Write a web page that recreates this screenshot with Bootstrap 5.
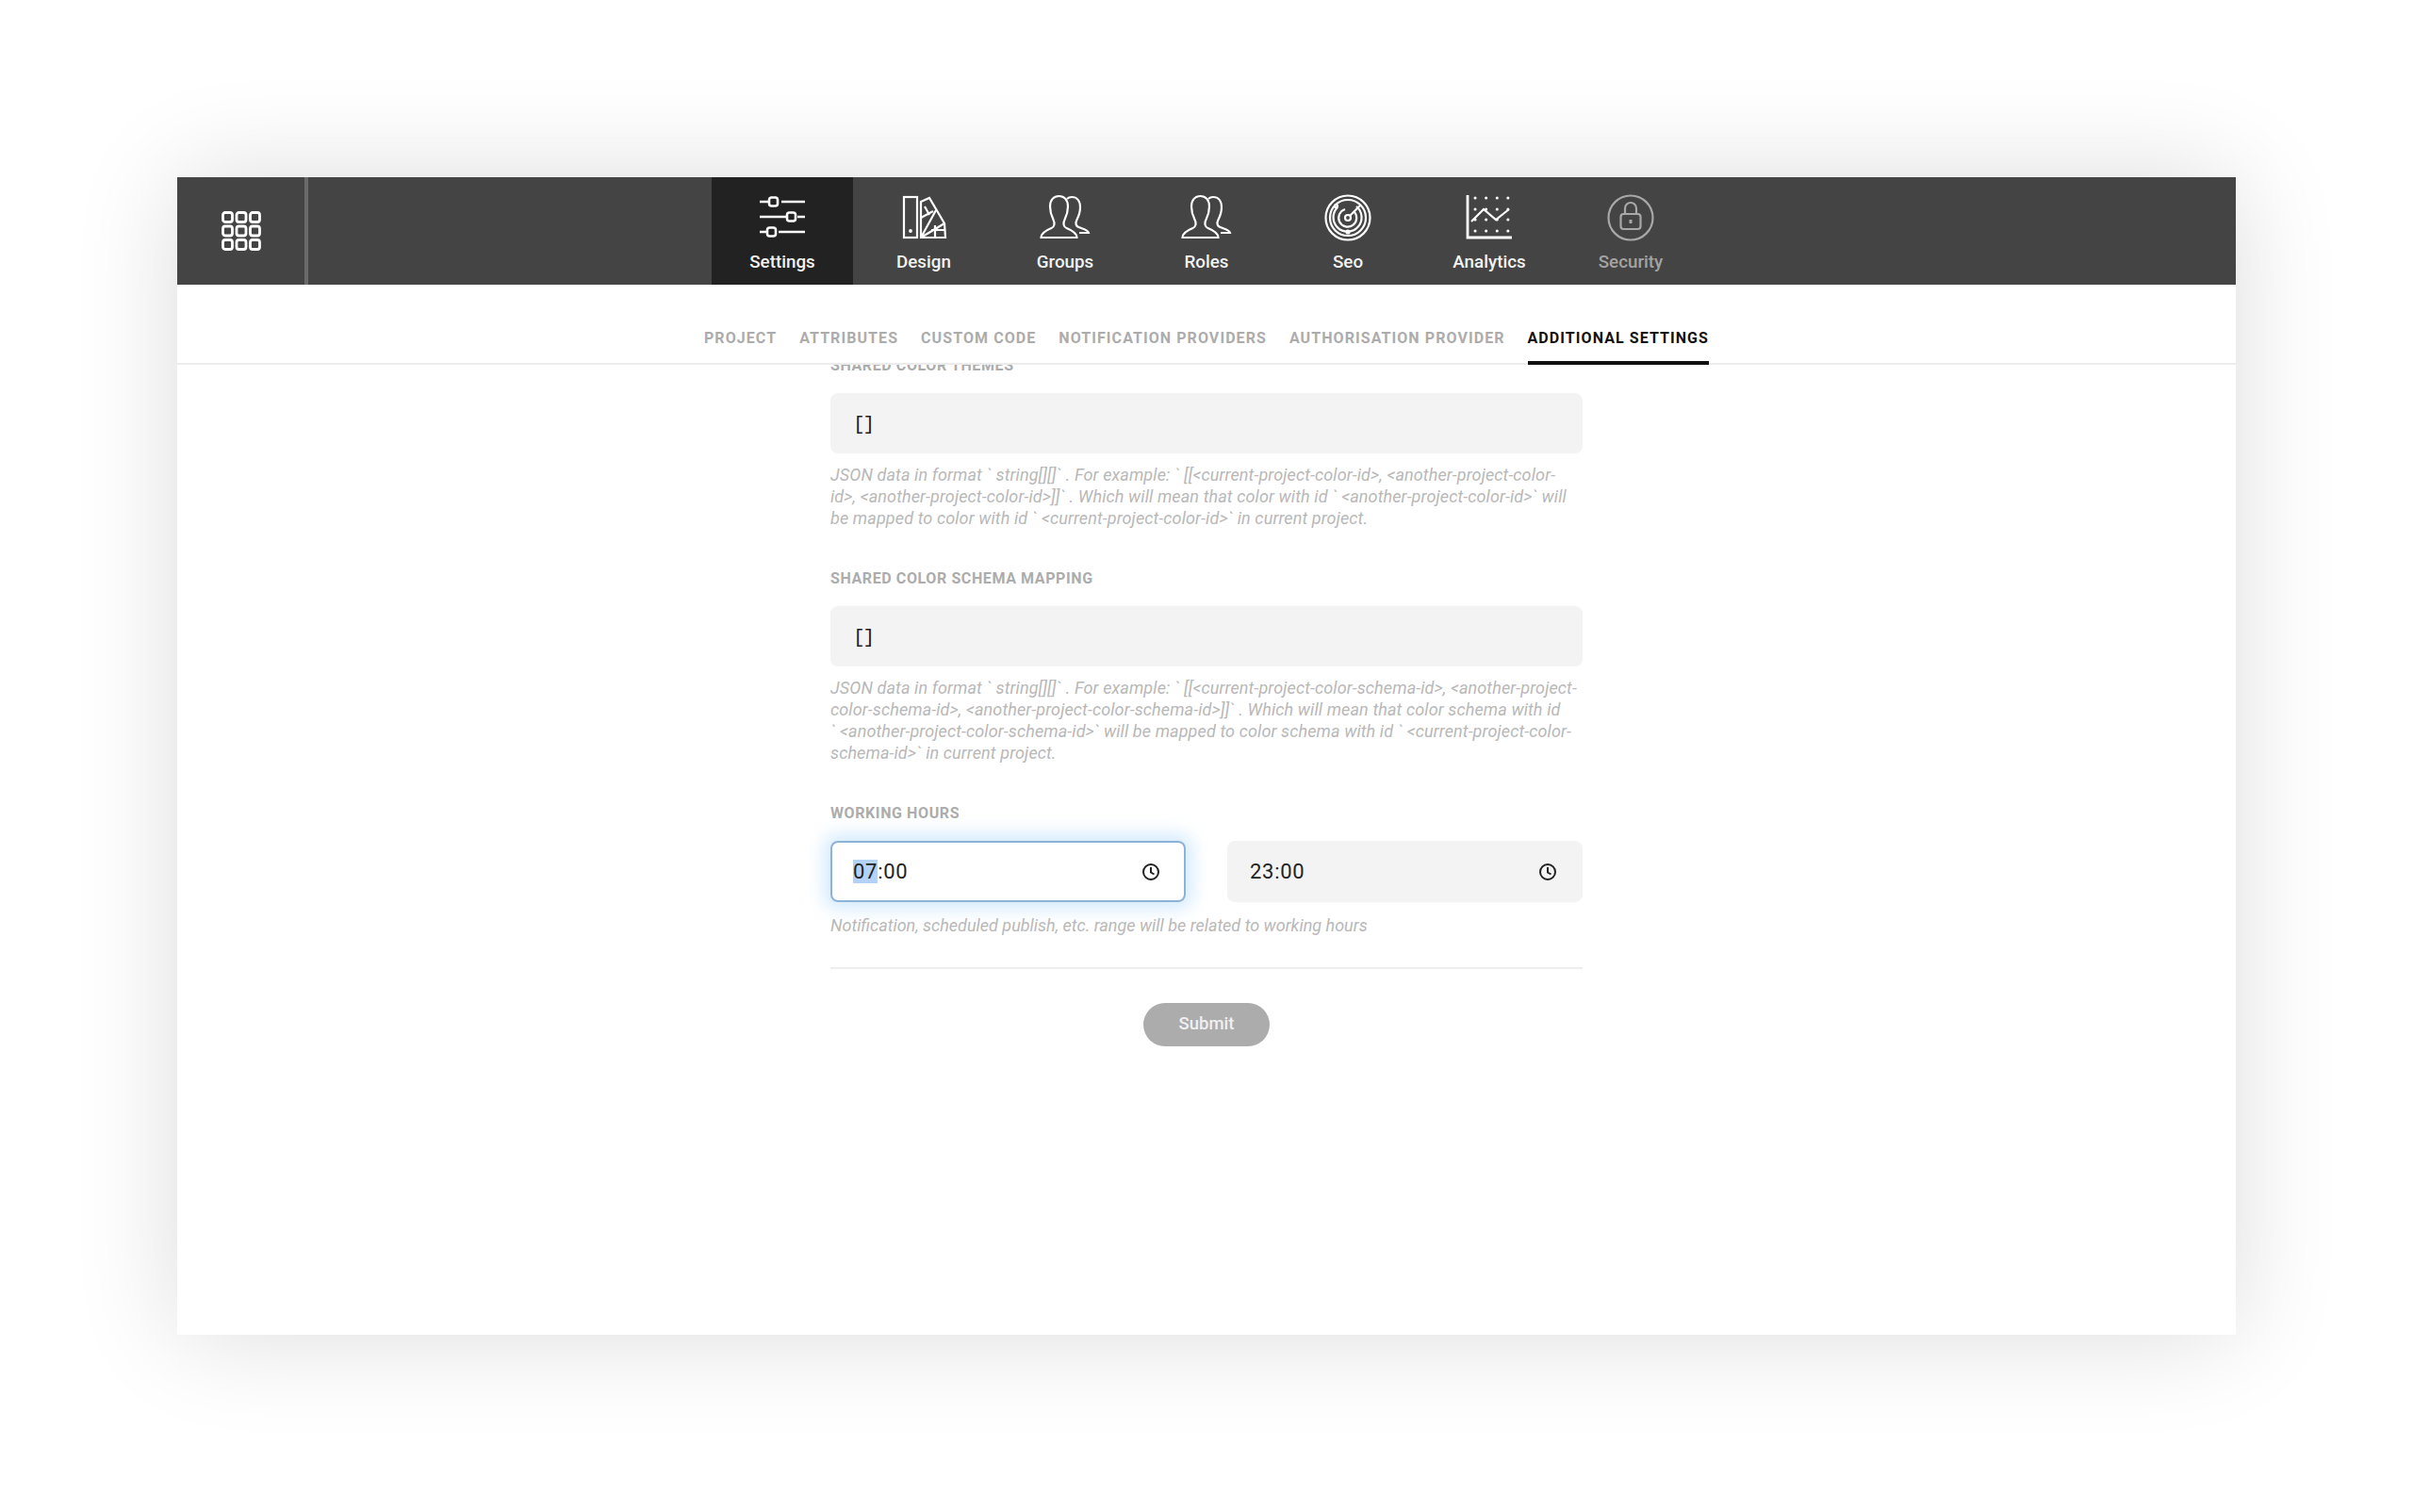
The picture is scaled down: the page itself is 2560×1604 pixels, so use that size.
<!DOCTYPE html>
<html lang="en">
<head>
    <meta charset="UTF-8">
    <meta name="viewport" content="width=device-width, initial-scale=1.0">
    <title>Project settings</title>
    <link href="https://cdn.jsdelivr.net/npm/bootstrap@5.3.0/dist/css/bootstrap.min.css" rel="stylesheet">
    <style>
        body {
            font-family: Roboto, "Liberation Sans", sans-serif;
            background-color: #ffffff;
            padding-top: 188px;
            height: 1604px;
            overflow: hidden;
        }
        .app-window {
            width: 2184px;
            height: 1228px;
            margin: 0 auto;
            background-color: #ffffff;
            box-shadow: 0 0 105px rgba(0,0,0,0.14);
        }
        .top-bar {
            height: 114px;
            background-color: #444444;
        }
        .top-side {
            flex: 1 1 0;
        }
        .apps-btn {
            width: 139px;
            height: 100%;
            border-right: 4px solid #6a6a6a;
        }
        .apps-btn svg {
            width: 42px;
            height: 42px;
        }
        .top-item {
            width: 150px;
            height: 114px;
            padding-top: 18px;
            color: #f2f2f2;
            font-size: 18.8px;
            font-weight: 500;
            line-height: 24px;
            text-decoration: none;
        }
        .top-item svg {
            display: block;
            height: 50px;
            margin-bottom: 10px;
            fill: none;
            stroke: #ffffff;
            stroke-width: 2.2;
        }
        .top-item.is-active {
            background-color: #222222;
        }
        .top-item.is-muted {
            color: #a3a3a3;
        }
        .top-item.is-muted svg {
            stroke: #a8a8a8;
        }
        .tab-bar {
            height: 85px;
            gap: 24px;
            border-bottom: 2px solid #ececec;
        }
        .tab-bar a {
            height: 85px;
            padding-top: 47px;
            color: #acacac;
            font-size: 16px;
            font-weight: 700;
            line-height: 20px;
            letter-spacing: 1.07px;
            text-decoration: none;
            white-space: nowrap;
        }
        .tab-bar a.is-active {
            color: #111111;
            border-bottom: 4px solid #111111;
            margin-bottom: -2px;
        }
        .form-clip {
            height: 1029px;
            overflow: hidden;
        }
        .form-col {
            width: 798px;
            margin: -9px auto 0;
        }
        .field-label {
            display: block;
            height: 20px;
            margin-bottom: 19px;
            color: #acacac;
            font-size: 16px;
            font-weight: 700;
            line-height: 20px;
            letter-spacing: 0.6px;
        }
        .field-box.form-control {
            height: 64px;
            padding: 0 24px;
            border: 0;
            border-radius: 8px;
            background-color: #f3f3f3;
            color: #222222;
            font-size: 22px;
            letter-spacing: 0.7px;
            line-height: 64px;
        }
        .mono-text {
            font-family: "Liberation Mono", monospace;
            font-size: 21px;
            letter-spacing: -2px;
        }
        .field-help {
            margin: 11px 0 0;
            color: #b8b8b8;
            font-size: 18px;
            font-style: italic;
            line-height: 23px;
        }
        .help-json {
            letter-spacing: 0.12px;
            white-space: nowrap;
        }
        .help-time {
            margin-top: 13px;
        }
        .field-gap {
            margin-top: 43px;
        }
        .time-row {
            gap: 44px;
        }
        .time-row .field-box.form-control {
            flex: 1 1 0;
            height: 65px;
        }
        .field-box.is-focused {
            background-color: #ffffff;
            box-shadow: inset 0 0 0 2px #8db2d8, 0 0 18px 7px rgba(140,200,250,0.38);
        }
        .hour-select {
            background-color: #b4d2f7;
        }
        .clock-icon {
            width: 20px;
            height: 20px;
            margin-right: 3px;
        }
        .form-rule {
            height: 2px;
            margin: 33px 0 36px;
            background-color: #eeeeee;
        }
        .submit-btn.btn {
            width: 134px;
            height: 46px;
            padding: 0;
            border: 0;
            border-radius: 23px;
            background-color: #acacac;
            color: #f0f0f0;
            font-size: 18.5px;
            font-weight: 500;
        }
    </style>
</head>
<body>
    <div class="app-window">
        <header class="top-bar d-flex">
            <div class="top-side">
                <div class="apps-btn d-flex align-items-center justify-content-center">
                    <svg viewBox="0 0 42 42" fill="none" stroke="#fff" stroke-width="2.8">
                        <rect x="1.5" y="1.5" width="10" height="10" rx="2.5"/><rect x="16" y="1.5" width="10" height="10" rx="2.5"/><rect x="30.5" y="1.5" width="10" height="10" rx="2.5"/>
                        <rect x="1.5" y="16" width="10" height="10" rx="2.5"/><rect x="16" y="16" width="10" height="10" rx="2.5"/><rect x="30.5" y="16" width="10" height="10" rx="2.5"/>
                        <rect x="1.5" y="30.5" width="10" height="10" rx="2.5"/><rect x="16" y="30.5" width="10" height="10" rx="2.5"/><rect x="30.5" y="30.5" width="10" height="10" rx="2.5"/>
                    </svg>
                </div>
            </div>
            <nav class="d-flex">
                <a href="#" class="top-item is-active d-flex flex-column align-items-center">
                    <svg viewBox="0 0 50 50">
                        <path d="M1 8h10M24 8h25M1 24h28M41 24h8M1 40h8M21 40h28" stroke-width="2.6"/>
                        <rect x="11" y="3.5" width="9" height="9" rx="2.5" stroke-width="2.6"/><rect x="30" y="19.5" width="9" height="9" rx="2.5" stroke-width="2.6"/><rect x="9" y="35.5" width="9" height="9" rx="2.5" stroke-width="2.6"/>
                    </svg>
                    Settings
                </a>
                <a href="#" class="top-item d-flex flex-column align-items-center">
                    <svg viewBox="0 0 50 50" stroke-width="2.4">
                        <rect x="4" y="3" width="14" height="43"/>
                        <circle cx="11" cy="39" r="0.8"/>
                        <path d="M22 46V8l9-4 16 27 1 15z"/>
                        <path d="M22 46l16-29M22 46l25-15M22 25l13-7M26 13l5 9M33 38h15M37 46V33"/>
                    </svg>
                    Design
                </a>
                <a href="#" class="top-item d-flex flex-column align-items-center">
                    <svg viewBox="0 0 54 50" stroke-width="2.4">
                        <path d="M1.5 46c0-5 6-8 11-10 3-1 4-5 2-9-2-4-3.500-9-3.500-14 0-7 4-11 9.500-11s9.500 4 9.500 11c0 5-1.500 10-3.500 14-2 4-1 8 2 9 5 2 11 5 11 10z"/>
                        <path d="M29 5c1.500-1.500 3.500-2 5-2 5.500 0 9 4 9 11 0 5-1.500 9-3.500 13-2 4-1 7 2 8 5 2 10 3 10.500 6H42"/>
                    </svg>
                    Groups
                </a>
                <a href="#" class="top-item d-flex flex-column align-items-center">
                    <svg viewBox="0 0 54 50" stroke-width="2.4">
                        <path d="M1.500 46c0-5 6-8 11-10 3-1 4-5 2-9-2-4-3.500-9-3.500-14 0-7 4-11 9.500-11s9.500 4 9.500 11c0 5-1.500 10-3.500 14-2 4-1 8 2 9 5 2 11 5 11 10z"/>
                        <path d="M29 5c1.500-1.500 3.500-2 5-2 5.500 0 9 4 9 11 0 5-1.500 9-3.500 13-2 4-1 7 2 8 5 2 10 3 10.500 6H42"/>
                    </svg>
                    Roles
                </a>
                <a href="#" class="top-item d-flex flex-column align-items-center">
                    <svg viewBox="0 0 50 50" stroke-width="2.4">
                        <circle cx="25" cy="25" r="23.500"/><circle cx="25" cy="25" r="19"/>
                        <path d="M14 14A15 15 0 1 0 34 13"/>
                        <path d="M22 16a9.500 9.500 0 1 0 9 2"/>
                        <circle cx="25" cy="25" r="3"/>
                        <path d="M27 23l11-11"/>
                        <circle cx="12.500" cy="12.500" r="1.500"/><circle cx="25" cy="40" r="1.500"/>
                    </svg>
                    Seo
                </a>
                <a href="#" class="top-item d-flex flex-column align-items-center">
                    <svg viewBox="0 0 50 50" stroke-width="2.6">
                        <path d="M2 1v45h47" stroke-width="2.800"/>
                        <path d="M6 29l13-13 13 11 14-11"/>
                        <g stroke-width="3" stroke-dasharray="0.100 11.500" stroke-linecap="round">
                            <path d="M10 4h36M10 16h36M10 27h36M10 39h36"/>
                        </g>
                    </svg>
                    Analytics
                </a>
                <a href="#" class="top-item is-muted d-flex flex-column align-items-center">
                    <svg viewBox="0 0 50 50" stroke-width="2.4">
                        <circle cx="25" cy="25" r="23.500"/>
                        <rect x="14.500" y="21" width="21" height="16" rx="3"/>
                        <path d="M19 21v-6a6 6 0 0 1 12 0v6"/>
                        <path d="M25 27v4" stroke-width="3"/>
                    </svg>
                    Security
                </a>
            </nav>
            <div class="top-side"></div>
        </header>

        <nav class="tab-bar nav justify-content-center">
            <a href="#">PROJECT</a>
            <a href="#">ATTRIBUTES</a>
            <a href="#">CUSTOM CODE</a>
            <a href="#">NOTIFICATION PROVIDERS</a>
            <a href="#">AUTHORISATION PROVIDER</a>
            <a href="#" class="is-active">ADDITIONAL SETTINGS</a>
        </nav>

        <div class="form-clip">
            <form class="form-col">
                <label class="field-label">SHARED COLOR THEMES</label>
                <div class="field-box form-control"><span class="mono-text">[]</span></div>
                <p class="field-help help-json">JSON data in format ` string[][]` . For example: ` [[&lt;current-project-color-id&gt;, &lt;another-project-color-<br>id&gt;, &lt;another-project-color-id&gt;]]` . Which will mean that color with id ` &lt;another-project-color-id&gt;` will<br>be mapped to color with id ` &lt;current-project-color-id&gt;` in current project.</p>

                <label class="field-label field-gap">SHARED COLOR SCHEMA MAPPING</label>
                <div class="field-box form-control"><span class="mono-text">[]</span></div>
                <p class="field-help help-json">JSON data in format ` string[][]` . For example: ` [[&lt;current-project-color-schema-id&gt;, &lt;another-project-<br>color-schema-id&gt;, &lt;another-project-color-schema-id&gt;]]` . Which will mean that color schema with id<br>` &lt;another-project-color-schema-id&gt;` will be mapped to color schema with id ` &lt;current-project-color-<br>schema-id&gt;` in current project.</p>

                <label class="field-label field-gap">WORKING HOURS</label>
                <div class="time-row d-flex">
                    <div class="field-box form-control is-focused d-flex align-items-center justify-content-between">
                        <span><span class="hour-select">07</span>:00</span>
                        <svg class="clock-icon" viewBox="0 0 20 20" fill="none" stroke="#222" stroke-width="2"><circle cx="10" cy="10" r="8"/><path d="M10 5v5.500l3.500 2"/></svg>
                    </div>
                    <div class="field-box form-control d-flex align-items-center justify-content-between">
                        <span>23:00</span>
                        <svg class="clock-icon" viewBox="0 0 20 20" fill="none" stroke="#222" stroke-width="2"><circle cx="10" cy="10" r="8"/><path d="M10 5v5.500l3.500 2"/></svg>
                    </div>
                </div>
                <p class="field-help help-time">Notification, scheduled publish, etc. range will be related to working hours</p>

                <div class="form-rule"></div>
                <div class="text-center">
                    <button type="button" class="submit-btn btn">Submit</button>
                </div>
            </form>
        </div>
    </div>

    <script src="https://cdn.jsdelivr.net/npm/bootstrap@5.3.0/dist/js/bootstrap.bundle.min.js"></script>
</body>
</html>
